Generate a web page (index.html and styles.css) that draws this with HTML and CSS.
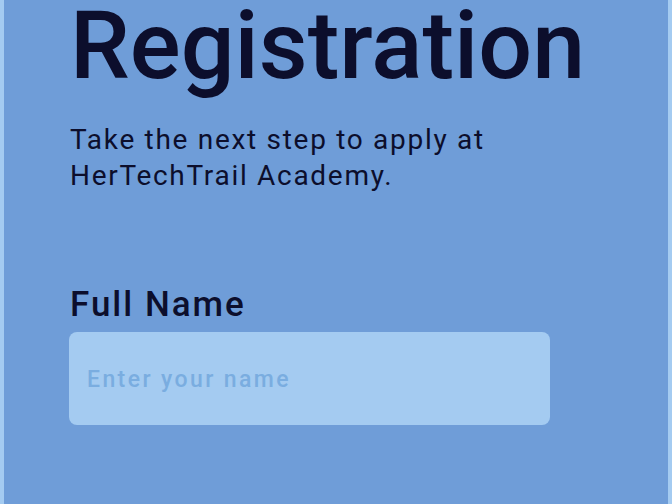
FILE: index.html
```html
<!DOCTYPE html>
<html>
<head>
<meta charset="utf-8">
<link rel="stylesheet" href="styles.css">
</head>
<body>
<div class="page">
  <div class="content">
    <h1 class="title">Registration</h1>
    <p class="subtitle">Take the next step to apply at<br>HerTechTrail Academy.</p>
    <label class="label" for="name">Full Name</label>
    <div class="field" id="name"><span class="placeholder">Enter your name</span></div>
  </div>
</div>
</body>
</html>
```
FILE: styles.css
```css
html, body {
  margin: 0;
  padding: 0;
  height: 100%;
  overflow: hidden;
}
body {
  font-family: Roboto, "Noto Sans", sans-serif;
  color: #0c0e2c;
}
.page {
  height: 504px;
  background: #6f9dd8;
  border-left: 4px solid #a4cbf1;
  border-right: 4px solid #a4cbf1;
  box-sizing: border-box;
}
.content {
  padding-left: 65px;
  width: 481px;
  display: flex;
  flex-direction: column;
}
.title {
  margin: 0 0 0 1px;
  font-size: 95px;
  font-weight: 500;
  line-height: 92px;
  letter-spacing: 0;
  white-space: nowrap;
}
.subtitle {
  margin: 30px 0 0 1px;
  font-size: 28px;
  line-height: 36px;
  letter-spacing: 1.7px;
}
.label {
  margin: 91px 0 0 1px;
  font-size: 35px;
  font-weight: 500;
  line-height: 40px;
  letter-spacing: 2px;
}
.field {
  margin-top: 7px;
  height: 93px;
  width: 481px;
  background: #a4cbf1;
  border-radius: 8px;
  display: flex;
  align-items: center;
  padding-left: 18px;
  box-sizing: border-box;
}
.placeholder {
  font-size: 23px;
  font-weight: 500;
  color: #7aade0;
  letter-spacing: 2.4px;
  padding-top: 1px;
}
```
